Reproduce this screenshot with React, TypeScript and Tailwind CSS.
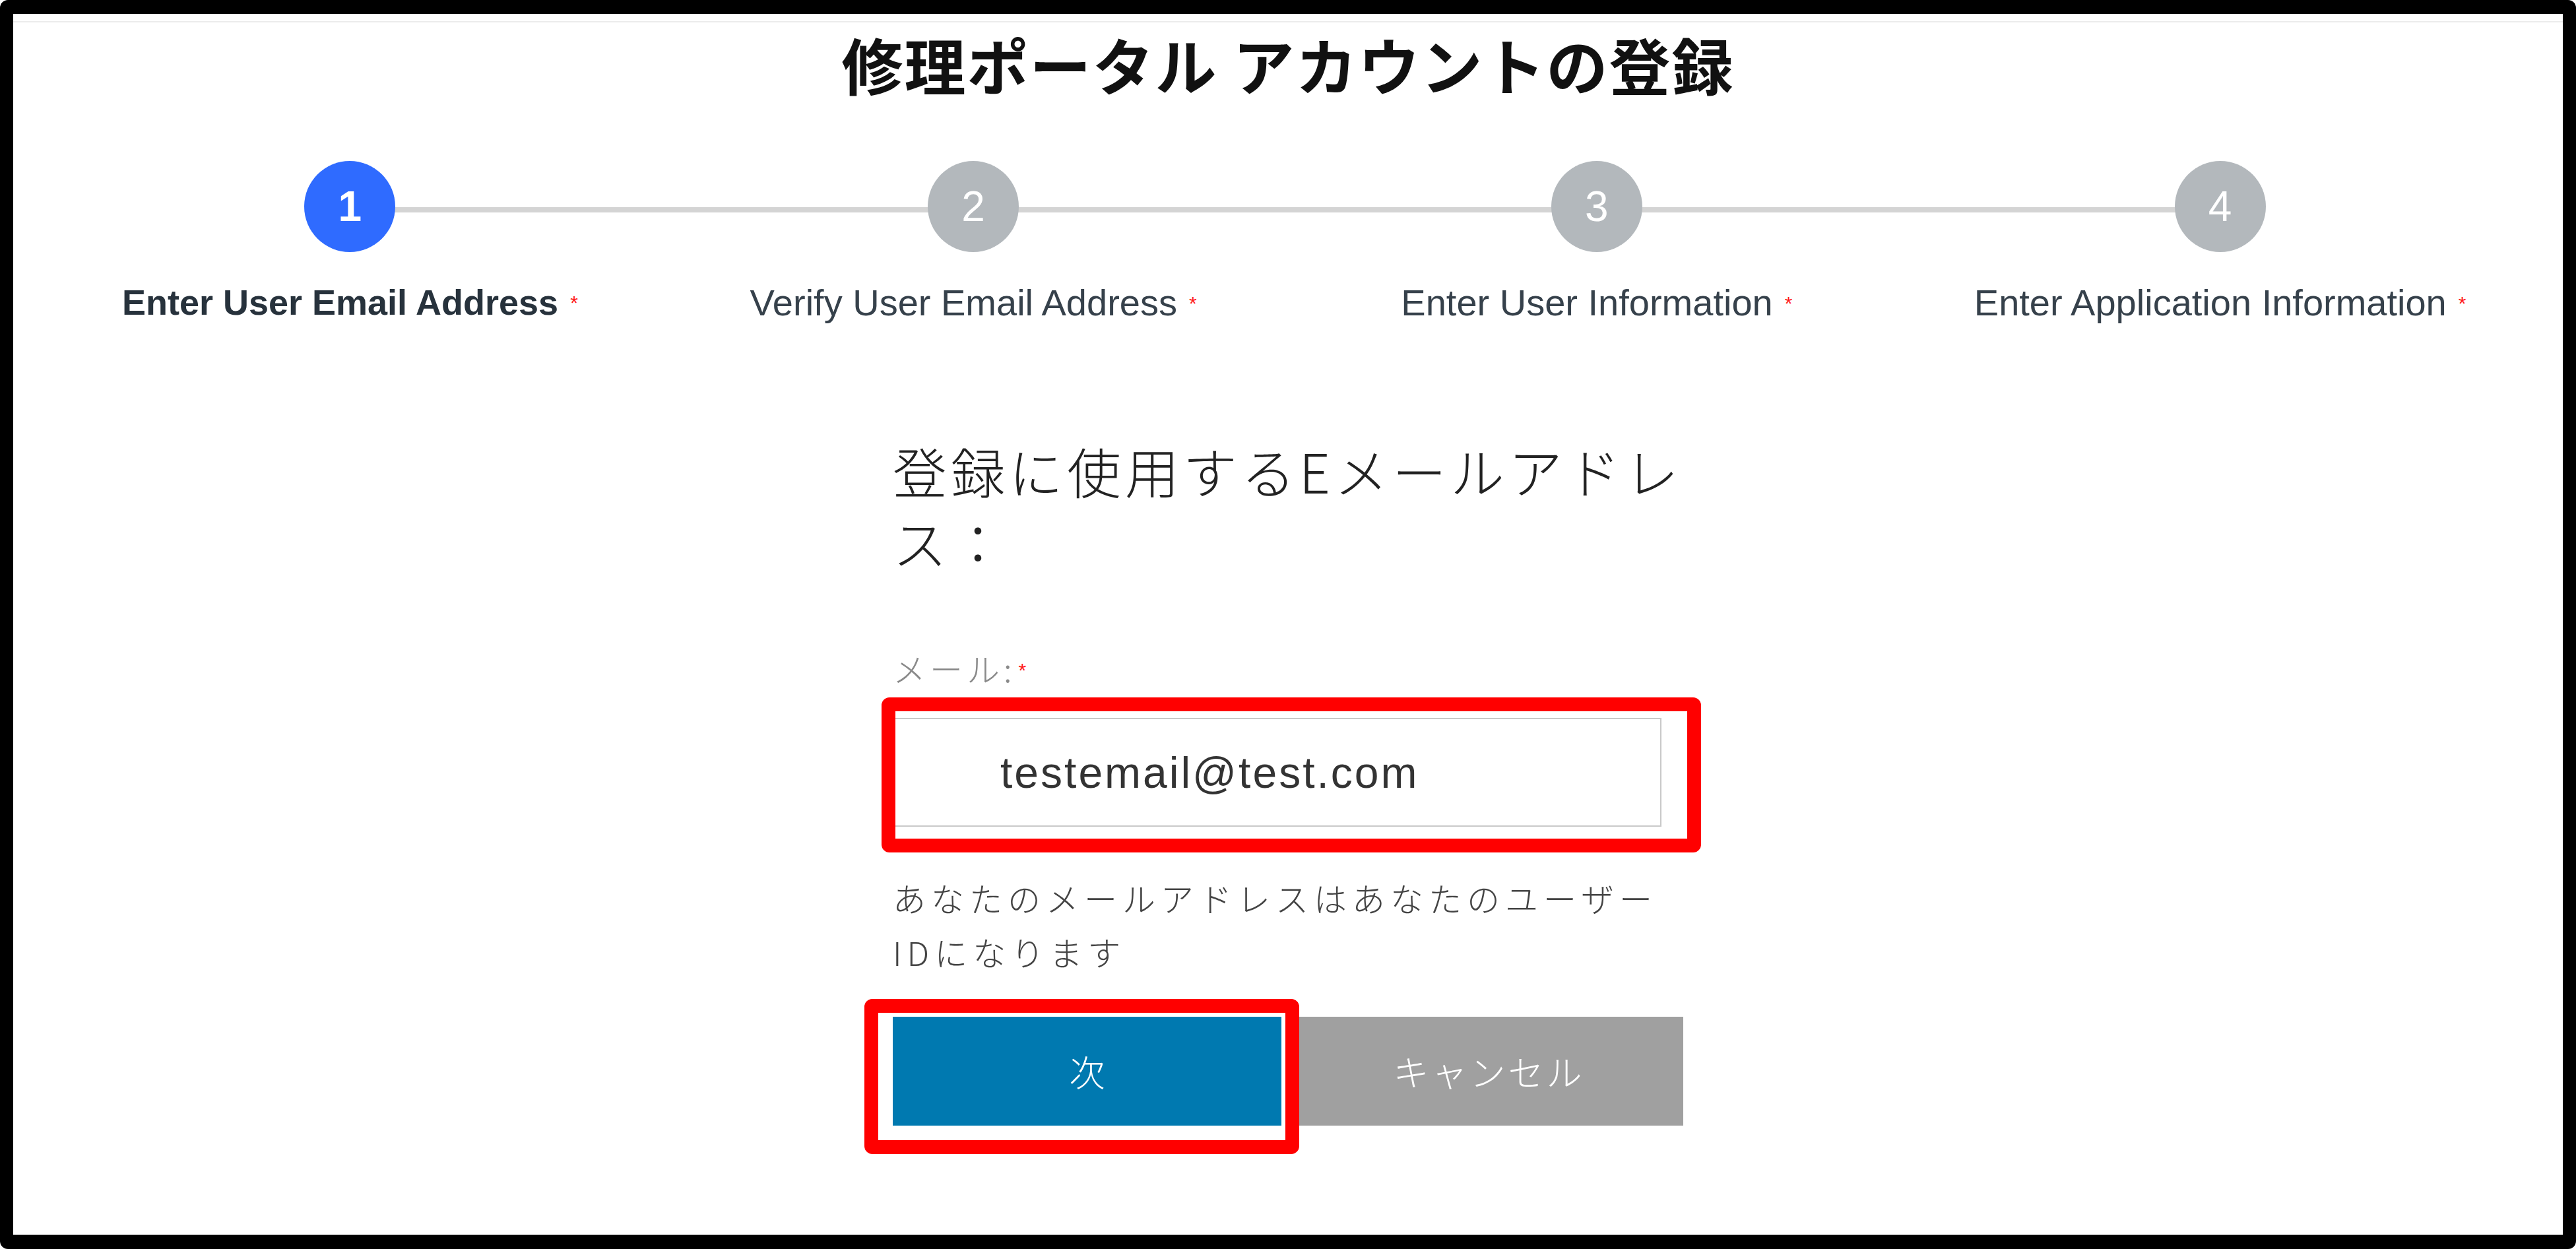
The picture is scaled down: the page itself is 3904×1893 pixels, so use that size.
const steps = [
  { n: 1, label: "Enter User Email Address", active: true },
  { n: 2, label: "Verify User Email Address", active: false },
  { n: 3, label: "Enter User Information", active: false },
  { n: 4, label: "Enter Application Information", active: false },
];

const jp = "font-['Noto_Sans_CJK_JP',sans-serif]";
const latin = "font-['Liberation_Sans',Arial,sans-serif]";

function Stepper() {
  return (
    <div className="relative mt-[101px] grid grid-cols-4 pl-[38px] pr-[47px]">
      <div className="absolute left-[510px] top-[70px] h-[8px] w-[2834px] bg-[#d4d4d4]" />
      {steps.map((s) => (
        <div key={s.n} className="relative flex flex-col items-center">
          <div
            className={`flex h-[138px] w-[138px] items-center justify-center rounded-full text-[64px] leading-none text-white ${latin} ${
              s.active ? "bg-[#2f6bff] font-bold" : "bg-[#b3b8bc]"
            }`}
          >
            {s.n}
          </div>
          <p
            className={`mt-[49px] leading-none whitespace-nowrap ${latin} ${
              s.active ? "text-[54px] font-bold text-[#27323c]" : "text-[56px] text-[#36414b]"
            }`}
          >
            {s.label}
            <span className="relative -top-[8px] ml-[18px] text-[30px] font-normal text-[#ff1a1a]">*</span>
          </p>
        </div>
      ))}
    </div>
  );
}

function EmailForm() {
  return (
    <div className="mx-auto mt-[172px] w-[1198px]">
      <h2 className={`text-[82px] leading-[108px] font-light tracking-[6px] whitespace-nowrap text-[#222] ${jp}`}>
        登録に使用するEメールアドレ
        <br />
        ス：
      </h2>

      <label className={`mt-[107px] block text-[50px] leading-[60px] font-light tracking-[6px] text-[#8a8a8a] ${jp}`}>
        メール:
        <span className={`relative -top-[8px] ml-[4px] text-[30px] text-[#ff1a1a] ${latin}`}>*</span>
      </label>

      <div className="relative mt-[34px] w-[1165px]">
        <div className="flex h-[165px] items-center border-2 border-[#c9c9c9] bg-white pl-[161px]">
          <span className={`text-[66px] leading-none tracking-[3px] text-[#333] ${latin}`}>testemail@test.com</span>
        </div>
        <div className="pointer-events-none absolute -top-[31px] -right-[60px] -bottom-[39px] -left-[17px] rounded-[12px] border-[21px] border-[#ff0000]" />
      </div>

      <p className={`mt-[66px] text-[50px] leading-[82px] font-light tracking-[8px] whitespace-nowrap text-[#444] ${jp}`}>
        あなたのメールアドレスはあなたのユーザー
        <br />
        IDになります
      </p>

      <div className="mt-[58px] flex gap-[20px]">
        <div className="relative">
          <button className={`h-[165px] w-[589px] bg-[#0079b0] text-[54px] font-light text-white ${jp}`}>次</button>
          <div className="pointer-events-none absolute -top-[27px] -right-[27px] -bottom-[43px] -left-[43px] rounded-[12px] border-[21px] border-[#ff0000]" />
        </div>
        <button className={`h-[165px] w-[589px] bg-[#a0a0a0] text-[54px] font-light tracking-[4px] text-white ${jp}`}>
          キャンセル
        </button>
      </div>
    </div>
  );
}

export default function App() {
  return (
    <div className="h-[1893px] w-[3904px] bg-white">
      <div className="h-full rounded-[12px] bg-black px-[20px] py-[21px]">
        <div className="flex h-full flex-col border-b-2 border-[#c8c8c8] bg-white">
          <div className="h-[13px] border-b-2 border-[#ececec]" />
          <h1 className={`mt-[16px] text-center text-[93px] leading-none font-bold tracking-[2px] text-[#111] ${jp}`}>
            修理ポータル アカウントの登録
          </h1>
          <Stepper />
          <EmailForm />
        </div>
      </div>
    </div>
  );
}
